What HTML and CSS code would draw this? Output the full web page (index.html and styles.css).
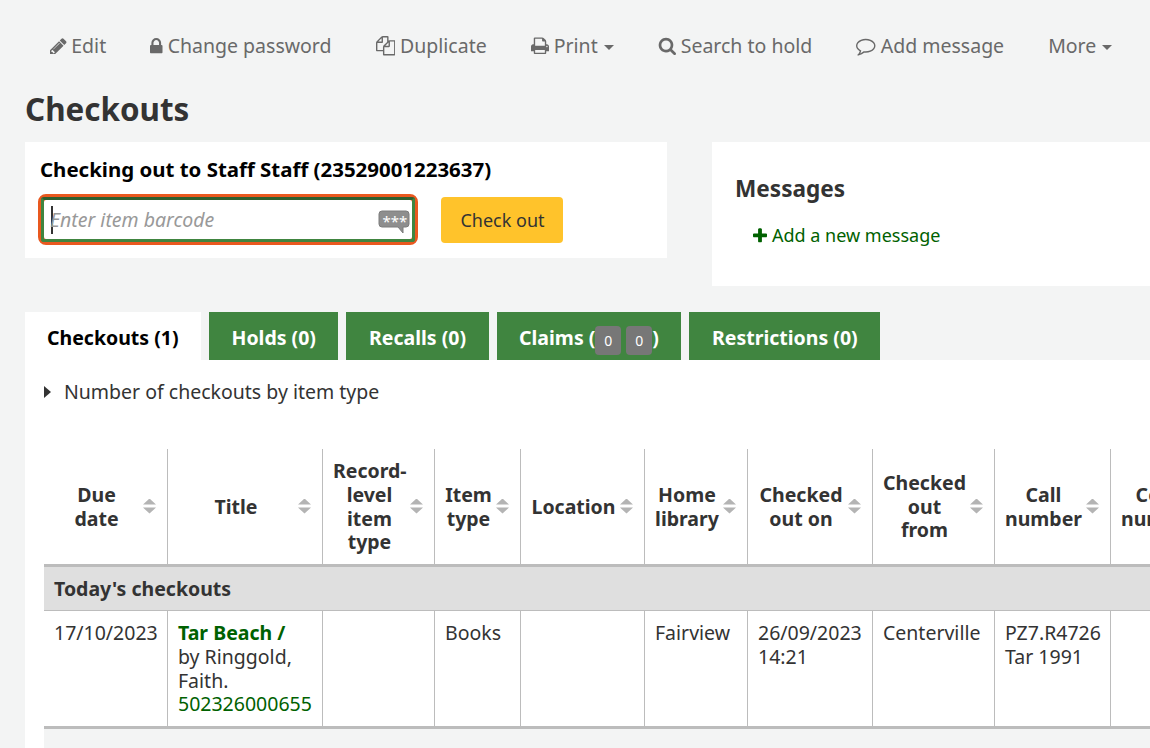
FILE: index.html
```html
<!DOCTYPE html>
<html lang="en">
<head>
<meta charset="utf-8">
<title>Checkouts</title>
<link rel="stylesheet" href="styles.css">
</head>
<body>
<nav class="toolbar">
  <a class="tool"><svg class="ico ico-edit" viewBox="128 128 1536 1536"><path d="M491 1536l91-91-235-235-91 91v107h128v128h107zm523-928q0-22-22-22-10 0-17 7l-542 542q-7 7-7 17 0 22 22 22 10 0 17-7l542-542q7-7 7-17zm-54-192l416 416-832 832h-416v-416zm683 96q0 53-37 90l-166 166-416-416 166-165q36-38 90-38 53 0 91 38l235 234q37 39 37 91z"/></svg>Edit</a>
  <a class="tool"><svg class="ico ico-lock" viewBox="0 128 1152 1536"><path d="M320 768h512v-192q0-106-75-181t-181-75-181 75-75 181v192zm832 96v576q0 40-28 68t-68 28h-960q-40 0-68-28t-28-68v-576q0-40 28-68t68-28h32v-192q0-184 132-316t316-132 316 132 132 316v192h32q40 0 68 28t28 68z"/></svg>Change password</a>
  <a class="tool"><svg class="ico ico-wide" viewBox="0 0 1792 1792"><path d="M1696 384q40 0 68 28t28 68v1216q0 40-28 68t-68 28h-960q-40 0-68-28t-28-68v-288h-544q-40 0-68-28t-28-68v-672q0-40 20-88t48-76l408-408q28-28 76-48t88-20h416q40 0 68 28t28 68v328q68-40 128-40h416zm-544 213l-299 299h299v-299zm-640-384l-299 299h299v-299zm196 647l316-316v-416h-384v416q0 40-28 68t-68 28h-416v640h512v-256q0-40 20-88t48-76zm956 804v-1152h-384v416q0 40-28 68t-68 28h-416v640h896z"/></svg>Duplicate</a>
  <a class="tool"><svg class="ico ico-print" viewBox="64 0 1664 1792"><path d="M448 1536h896v-256h-896v256zm0-640h896v-384h-160q-40 0-68-28t-28-68v-160h-640v640zm1152 64q0-26-19-45t-45-19-45 19-19 45 19 45 45 19 45-19 19-45zm128 0v416q0 13-9.5 22.5t-22.5 9.5h-224v160q0 40-28 68t-68 28h-960q-40 0-68-28t-28-68v-160h-224q-13 0-22.5-9.5t-9.5-22.5v-416q0-79 56.5-135.5t135.5-56.5h64v-544q0-40 28-68t68-28h672q40 0 88 20t76 48l152 152q28 28 48 76t20 88v256h64q79 0 135.5 56.5t56.5 135.5z"/></svg>Print<span class="caret"></span></a>
  <a class="tool"><svg class="ico ico-print" viewBox="0 0 1728 1792"><path d="M1216 832q0-185-131.5-316.5t-316.5-131.5-316.5 131.5-131.5 316.5 131.5 316.5 316.5 131.5 316.5-131.5 131.5-316.5zm512 832q0 52-38 90t-90 38q-54 0-90-38l-343-342q-179 124-399 124-143 0-273.5-55.5t-225-150-150-225-55.5-273.5 55.5-273.5 150-225 225-150 273.5-55.5 273.5 55.5 225 150 150 225 55.5 273.5q0 220-124 399l343 343q37 37 37 90z"/></svg>Search to hold</a>
  <a class="tool"><svg class="ico ico-wide" viewBox="0 0 1792 1792"><path d="M896 384q-204 0-381.5 69.5t-282 187.5-104.5 255q0 112 71.5 213.5t201.5 175.5l87 50-27 96q-24 91-70 172 152-63 275-171l43-38 57 6q69 8 130 8 204 0 381.5-69.5t282-187.5 104.5-255-104.5-255-282-187.5-381.5-69.5zm896 512q0 174-120 321.5t-326 233-450 85.5q-70 0-145-8-198 175-460 242-49 14-114 22h-5q-15 0-27-10.5t-16-27.5v-1q-3-4-.5-12t2-10 4.5-9.5l6-9 7-8.5 8-9q7-8 31-34.5t34.5-38 31-39.5 32.5-51 27-59 26-76q-157-89-247.5-220t-90.5-281q0-174 120-321.5t326-233 450-85.5 450 85.5 326 233 120 321.5z"/></svg>Add message</a>
  <a class="tool">More<span class="caret"></span></a>
</nav>

<main class="main">
  <h1 class="page-title">Checkouts</h1>

  <div class="top-row">
    <section class="panel checkout-panel">
      <h2 class="checkout-heading">Checking out to Staff Staff (23529001223637)</h2>
      <div class="checkout-form">
        <div class="barcode">
          <span class="cursor"></span>
          <span class="placeholder">Enter item barcode</span>
          <svg class="pw-ico" viewBox="0 0 32 24"><path d="M4 1h24a3 3 0 0 1 3 3v10a3 3 0 0 1-3 3h-3v6l-5-6H4a3 3 0 0 1-3-3V4a3 3 0 0 1 3-3z" fill="#8e8e8e" stroke="#7c7c7c" stroke-width="1"/><text x="17" y="16.5" text-anchor="middle" class="pw-text">***</text></svg>
        </div>
        <button class="checkout-btn" type="button">Check out</button>
      </div>
    </section>
    <section class="panel messages-panel">
      <h3 class="messages-heading">Messages</h3>
      <a class="add-msg"><svg class="ico-plus" viewBox="0 0 1408 1792"><path d="M1408 736v192q0 40-28 68t-68 28h-416v416q0 40-28 68t-68 28h-192q-40 0-68-28t-28-68v-416h-416q-40 0-68-28t-28-68v-192q0-40 28-68t68-28h416v-416q0-40 28-68t68-28h192q40 0 68 28t28 68v416h416q40 0 68 28t28 68z"/></svg>Add a new message</a>
    </section>
  </div>

  <ul class="tabs">
    <li class="tab tab-active">Checkouts (1)</li>
    <li class="tab">Holds (0)</li>
    <li class="tab">Recalls (0)</li>
    <li class="tab">Claims (<span class="badge">0</span><span class="badge">0</span>)</li>
    <li class="tab">Restrictions (0)</li>
  </ul>

  <section class="tab-panel">
    <div class="summary"><span class="disclosure"></span>Number of checkouts by item type</div>
    <table class="issues">
      <colgroup>
        <col class="c-due"><col class="c-title"><col class="c-record"><col class="c-type"><col class="c-loc"><col class="c-home"><col class="c-on"><col class="c-from"><col class="c-call"><col class="c-copy">
      </colgroup>
      <thead>
        <tr>
          <th>Due date</th><th>Title</th><th>Record-level item type</th><th>Item type</th><th>Location</th><th>Home library</th><th>Checked out on</th><th>Checked out from</th><th>Call number</th><th>Copy number</th>
        </tr>
      </thead>
      <tbody>
        <tr class="group"><td colspan="10">Today's checkouts</td></tr>
        <tr>
          <td>17/10/2023</td>
          <td><a class="title-link">Tar Beach /</a><br>by Ringgold, Faith.<br><a class="barcode-link">502326000655</a></td>
          <td></td>
          <td>Books</td>
          <td></td>
          <td>Fairview</td>
          <td>26/09/2023 14:21</td>
          <td>Centerville</td>
          <td>PZ7.R4726 Tar 1991</td>
          <td></td>
        </tr>
      </tbody>
    </table>
    <div class="table-foot"></div>
  </section>
</main>
</body>
</html>
```
FILE: styles.css
```css
* { box-sizing: border-box; }
html, body { margin: 0; height: 748px; overflow: hidden; }
body {
  background: #f3f4f4;
  color: #333;
  font-family: "Noto Sans", sans-serif;
  font-size: 19.5px;
  line-height: 23.8px;
  width: 1150px;
}
.toolbar {
  display: flex;
  gap: 44px;
  padding: 34px 0 0 50px;
  height: 81px;
  color: #696969;
  white-space: nowrap;
}
.tool { display: flex; align-items: center; height: 24px; }
.ico { height: 19.5px; fill: #696969; margin-right: 5px; flex: none; }
.ico-edit { width: 16.7px; height: 16.7px; margin-right: 4.6px; }
.ico-lock { width: 12.5px; height: 16.7px; }
.ico-wide { width: 19.5px; }
.ico-print { width: 18px; }
.caret {
  display: inline-block;
  width: 0; height: 0;
  margin-left: 6px;
  margin-top: 3px;
  border: 5.5px solid transparent;
  border-top-color: #696969;
  border-bottom-width: 0;
}
.main { padding-left: 25px; width: 1400px; }
.page-title {
  margin: 0;
  font-size: 31.4px;
  line-height: 38px;
  font-weight: 700;
  color: #333;
  height: 61px;
  padding-top: 9px;
}
.top-row { display: flex; gap: 45px; align-items: flex-start; }
.panel { background: #fff; }
.checkout-panel { width: 642px; height: 116px; padding: 15px 15px 0; }
.checkout-heading { margin: 0; font-size: 20.45px; line-height: 24px; font-weight: 700; color: #000; }
.checkout-form { display: flex; align-items: center; gap: 23px; margin-top: 13px; margin-left: -2px; }
.barcode {
  position: relative;
  width: 380px;
  height: 51px;
  border-radius: 8px;
  background: #fff;
  display: flex;
  align-items: center;
  padding-left: 7px;
  border: 6px solid #e9581f;
}
.barcode::before {
  content: "";
  position: absolute;
  inset: -3px;
  border: 3px solid #408540;
  border-top-color: #2f5f2f;
  border-radius: 3px;
  pointer-events: none;
}
.cursor { width: 2px; height: 28px; background: #333; margin-right: -3px; flex: none; }
.placeholder { font-style: italic; color: #999; }
.pw-ico { position: absolute; right: 2px; top: 10px; width: 32px; height: 24px; }
.pw-text { font-size: 15px; fill: #fff; font-family: "Noto Sans", sans-serif; }
.checkout-btn {
  width: 122px;
  height: 46px;
  border: 0;
  border-radius: 4px;
  background: #ffc32b;
  color: #333;
  font: inherit;
  font-size: 18px;
  padding: 2px 0 0 1px;
}
.messages-panel { width: 650px; height: 144px; padding: 35px 23px 0; }
.messages-heading { margin: 0; font-size: 22.6px; line-height: 24px; font-weight: 700; }
.add-msg { display: flex; align-items: center; margin: 23px 0 0 18px; color: #006100; font-size: 18px; }
.ico-plus { width: 14px; height: 18px; fill: #006100; margin-right: 5px; }
.tabs { display: flex; gap: 8px; list-style: none; margin: 26px 0 0; padding: 0; }
.tab {
  display: flex;
  align-items: center;
  height: 48px;
  padding: 4px 22.5px 0;
  background: #408540;
  color: #fff;
  font-weight: 700;
  white-space: nowrap;
}
.tab-active { background: #fff; color: #000; padding: 4px 22px 0; width: 176px; }
.badge {
  display: inline-flex;
  align-items: center;
  justify-content: center;
  width: 26px;
  height: 29px;
  margin-top: 5px;
  background: #777;
  border-radius: 4px;
  color: #fff;
  font-size: 14px;
  font-weight: 400;
}
.badge + .badge { margin-left: 5px; }
.tab-panel { background: #fff; height: 388px; padding: 20px 0 0 19px; }
.summary { display: flex; align-items: center; height: 24px; }
.disclosure {
  width: 0; height: 0;
  margin-right: 13px;
  border: 6px solid transparent;
  border-left: 7px solid #333;
  border-right-width: 0;
}
.issues {
  table-layout: fixed;
  width: 1182px;
  border-collapse: separate;
  border-spacing: 0;
  margin-top: 45px;
}
.c-due { width: 123px; }
.c-title { width: 155px; }
.c-record { width: 112px; }
.c-type { width: 86px; }
.c-loc { width: 124px; }
.c-home { width: 103px; }
.c-on { width: 125px; }
.c-from { width: 122px; }
.c-call { width: 116px; }
.c-copy { width: 116px; }
.issues th {
  position: relative;
  padding: 10px 28px 10px 10px;
  height: 115px;
  text-align: center;
  font-weight: 700;
  border-left: 1px solid #bcbcbc;
  border-bottom: 3px solid #bcbcbc;
  vertical-align: middle;
}
.issues th:first-child, .issues td:first-child { border-left: 0; }
.issues th::after {
  content: "";
  position: absolute;
  right: 11px;
  top: 50%;
  width: 13px;
  height: 15px;
  margin-top: -8px;
  background: #b4b4b4;
  clip-path: polygon(50% 0, 100% 40%, 0 40%, 0 60%, 100% 60%, 50% 100%, 0 60%, 0 40%);
}
.issues td {
  padding: 10px 10px 9.6px;
  border-left: 1px solid #bcbcbc;
  border-bottom: 3px solid #bcbcbc;
  vertical-align: top;
}
.issues .group td {
  background: #dfdfdf;
  border-left: 0;
  border-bottom-width: 1px;
  padding-bottom: 9px;
  font-weight: 700;
}
.title-link { color: #006100; font-weight: 700; }
.barcode-link { color: #006100; }
.table-foot { height: 40px; background: #f3f4f4; }
```
